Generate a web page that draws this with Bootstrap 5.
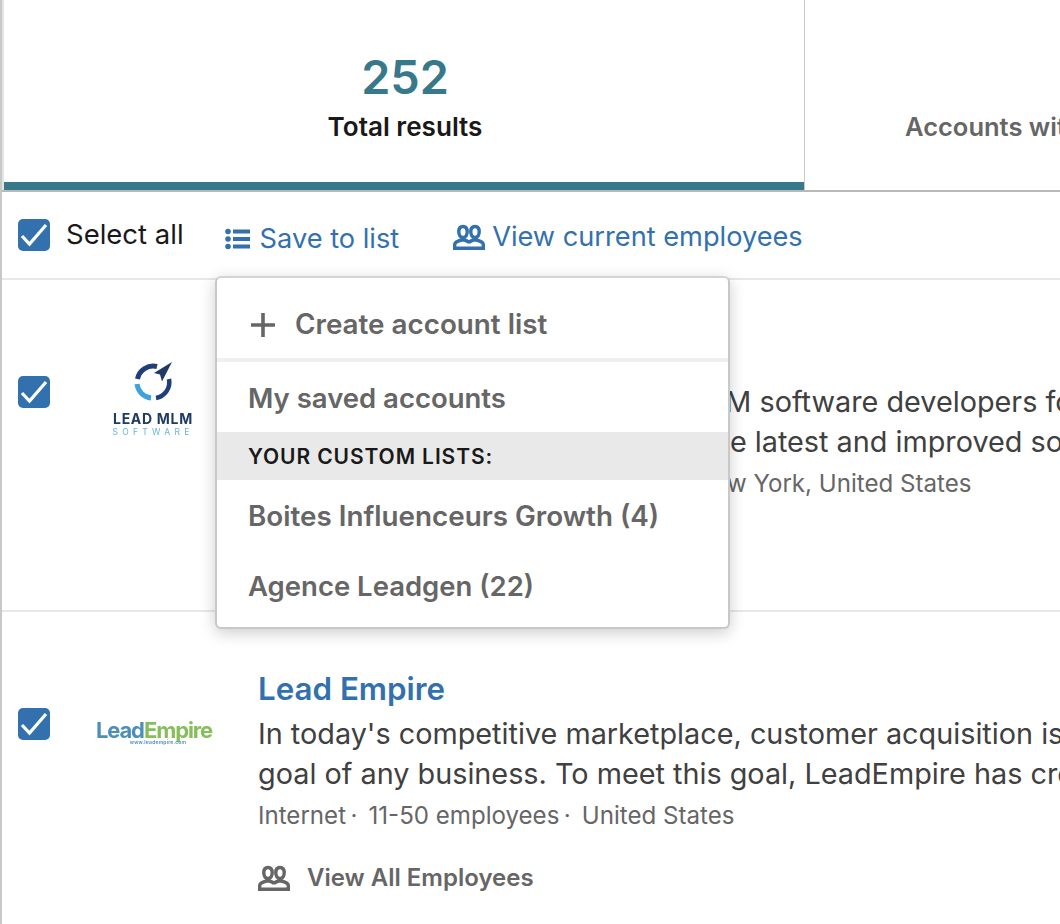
<!DOCTYPE html>
<html lang="en">
<head>
<meta charset="utf-8">
<title>Accounts</title>
<link href="https://cdn.jsdelivr.net/npm/bootstrap@5.3.0/dist/css/bootstrap.min.css" rel="stylesheet">
<style>
html,body{height:924px;overflow:hidden;background:#fff}
body{font-family:Inter,"Liberation Sans",sans-serif;color:#191919}
.pg{position:relative;height:924px;overflow:hidden;border-left:2px solid #c8c8c8}
.tabs{height:190px;border-bottom:2px solid #b8b8b8;box-sizing:content-box}
.tb{height:190px;text-align:center;flex:none}
.tb1{width:803px;padding-left:2px;border-right:1px solid #c9c9c9;border-left:2px solid #e4e4e4;box-shadow:inset 0 -8px 0 #37788a}
.tb2{flex:1;white-space:nowrap;overflow:hidden;padding-left:100px;text-align:left}
.num{font-size:46.800px;font-weight:600;color:#37788a;line-height:56px;padding-top:49px}
.tl{font-size:26.100px;font-weight:600;line-height:32px;margin-top:6px}
.tb2 .tl{color:#666;margin-top:111px;font-size:25.500px}
.tbar{height:88px;border-bottom:2px solid #e8e8e8;padding-left:16px}
.ck{width:32px;height:32px;background:#3271ad;border-radius:5px;display:flex;align-items:center;justify-content:center;flex:none}
.sa{font-size:27.500px;margin-left:16px;line-height:34px;margin-top:-2px}
.lk{color:#3271ad;font-size:27.200px;text-decoration:none;line-height:34px;display:flex;align-items:center}
.lk1{margin-left:41px;margin-top:8px}
.lk2{margin-left:54px;margin-top:4px}
.ic1{margin-right:10px}
.ic2{margin-right:7px}
.rw{height:332px;border-bottom:2px solid #e8e8e8;position:relative;padding-left:16px;display:flex}
.rw .ck{margin-top:96px}
.lg{width:130px;margin-left:38px;flex:none;text-align:center}
.bd{margin-left:40px;flex:1;min-width:0;white-space:nowrap;overflow:hidden}
.ttl{color:#3271ad;font-size:31.300px;font-weight:600;line-height:38px;text-decoration:none;display:block;margin-top:58px}
.dsc{font-size:28.800px;line-height:40px;color:#404040;margin-top:6px}
.mta{font-size:24.100px;line-height:32px;color:#666;margin-top:6px}
.ve{font-size:24px;font-weight:600;color:#666;display:flex;align-items:center;gap:17px;margin-top:31px;line-height:30px}
.lg1{margin-top:81px;filter:blur(.5px)}
.ln1{font-size:14px;font-weight:700;color:#1f3a63;letter-spacing:.7px;line-height:13px;margin-top:9px;white-space:nowrap}
.ln2{font-size:8.500px;color:#66b3de;letter-spacing:4.300px;line-height:10px;margin-top:2px;white-space:nowrap}
.lg2{margin-top:105px;margin-left:2px;font-size:22px;font-weight:700;letter-spacing:-1.100px;line-height:26px;filter:blur(.7px);white-space:nowrap}
.lg2 b{color:#4e8fb8;font-weight:700}
.lg2 i{color:#86bf5a;font-style:normal}
.ln3{font-size:5px;letter-spacing:.2px;line-height:5px;color:#4e8fb8;margin-top:-3px;padding-left:8px;font-weight:600}
.mnu{position:absolute;left:213px;top:276px;width:515px;height:353px;background:#fff;border:2px solid #c8c8c8;border-top-color:#d4d4d4;border-radius:6px;box-shadow:0 4px 16px rgba(0,0,0,.2);z-index:5;overflow:hidden;color:#666;font-weight:600;font-size:27.800px}
.mnu>div{display:flex;align-items:center}
.m1{height:84px;border-bottom:4px solid #f0f0f0;padding-left:34px;gap:20px;padding-top:13px}
.m2{height:70px;padding-left:31px;padding-top:3px;font-size:27.500px}
.m3{height:48px;background:#e9e9e9;color:#191919;font-size:21px;padding-left:31px;letter-spacing:.9px;padding-top:2px}
.m4{height:72px;padding-left:31px;padding-top:2px}
.m5{height:68px;padding-left:31px;padding-top:2px;font-size:27.500px}
</style>
</head>
<body>
<div class="pg">
  <div class="tabs d-flex">
    <div class="tb tb1"><div class="num">252</div><div class="tl">Total results</div></div>
    <div class="tb tb2"><div class="tl">Accounts with recent activity</div></div>
  </div>
  <div class="tbar d-flex align-items-center">
    <span class="ck"><svg width="28" height="26" viewBox="0 0 28 26"><path d="M2 14l7.500 8L26 3" fill="none" stroke="#fff" stroke-width="3.200"/></svg></span>
    <span class="sa">Select all</span>
    <a class="lk lk1" href="#"><svg class="ic1" width="25" height="22" viewBox="0 0 25 22" fill="#3271ad"><circle cx="3" cy="3.500" r="2.800"/><circle cx="3" cy="11" r="2.800"/><circle cx="3" cy="18.500" r="2.800"/><rect x="8" y="1.500" width="17" height="4"/><rect x="8" y="9" width="17" height="4"/><rect x="8" y="16.500" width="17" height="4"/></svg>Save to list</a>
    <a class="lk lk2" href="#"><svg class="ic2" width="32" height="26" viewBox="0 0 32 26" fill="none" stroke="#3271ad" stroke-width="3.400"><path d="M10 2.500c2.800 0 4.200 2.200 4.200 5.200s-1.400 5.800-4.200 5.800-4.200-2.800-4.200-5.800S7.200 2.500 10 2.500zM22 2.500c2.800 0 4.200 2.200 4.200 5.200s-1.400 5.800-4.200 5.800-4.200-2.800-4.200-5.800 1.400-5.200 4.200-5.200z"/><path d="M1.700 24.300v-3.800c0-2.500 3-3.500 6.800-4.500h3c2.500.7 4.500 1.800 4.500 3.500 0-1.700 2-2.800 4.500-3.500h3c3.800 1 6.800 2 6.800 4.500v3.800z"/></svg>View current employees</a>
  </div>
  <div class="rw">
    <span class="ck"><svg width="28" height="26" viewBox="0 0 28 26"><path d="M2 14l7.500 8L26 3" fill="none" stroke="#fff" stroke-width="3.200"/></svg></span>
    <div class="lg"><div class="lg1">
      <svg class="d-block mx-auto" width="40" height="42" viewBox="0 0 40 42"><path d="M24 5.500A16 16 0 0 0 4.500 18" fill="none" stroke="#1f3f7a" stroke-width="5"/><path d="M4 23a16 16 0 0 0 14 14" fill="none" stroke="#3ea3dc" stroke-width="5"/><path d="M23 37a16 16 0 0 0 13-19" fill="none" stroke="#1f3f7a" stroke-width="4.500"/><path d="M39 1L21 12l6 1.500 2 7z" fill="#1f3a63"/></svg>
      <div class="ln1">LEAD MLM</div><div class="ln2">SOFTWARE</div></div></div>
    <div class="bd">
      <a class="ttl" href="#">Lead MLM Software</a>
      <div class="dsc">We are one of the world's best MLM software developers for<br>network marketers wanting only the latest and improved solutions</div>
      <div class="mta">Internet Software&#8201;·&nbsp;&#8201;11-50 employees&#8201;·&nbsp;&#8201;&#8201;New York, United States</div>
    </div>
  </div>
  <div class="rw">
    <span class="ck"><svg width="28" height="26" viewBox="0 0 28 26"><path d="M2 14l7.500 8L26 3" fill="none" stroke="#fff" stroke-width="3.200"/></svg></span>
    <div class="lg"><div class="lg2"><b>Lead</b><i>Empire</i><div class="ln3">www.leadempire.com</div></div></div>
    <div class="bd">
      <a class="ttl" href="#">Lead Empire</a>
      <div class="dsc">In today's competitive marketplace, customer acquisition is the<br>goal of any business. To meet this goal, LeadEmpire has created</div>
      <div class="mta">Internet&#8201;·&nbsp;&#8201;11-50 employees&#8201;·&nbsp;&#8201;United States</div>
      <div class="ve"><svg width="32" height="26" viewBox="0 0 32 26" fill="none" stroke="#666" stroke-width="3.400"><path d="M10 2.500c2.800 0 4.200 2.200 4.200 5.200s-1.400 5.800-4.200 5.800-4.200-2.800-4.200-5.800S7.200 2.500 10 2.500zM22 2.500c2.800 0 4.200 2.200 4.200 5.200s-1.400 5.800-4.200 5.800-4.200-2.800-4.200-5.800 1.400-5.200 4.200-5.200z"/><path d="M1.700 24.300v-3.800c0-2.500 3-3.500 6.800-4.500h3c2.500.7 4.500 1.800 4.500 3.500 0-1.700 2-2.800 4.500-3.500h3c3.800 1 6.800 2 6.800 4.500v3.800z"/></svg>View All Employees</div>
    </div>
  </div>
  <div class="mnu">
    <div class="m1"><svg width="24" height="24" viewBox="0 0 24 24"><path d="M12 0v24M0 12h24" stroke="#666" stroke-width="3.600"/></svg>Create account list</div>
    <div class="m2">My saved accounts</div>
    <div class="m3">YOUR CUSTOM LISTS:</div>
    <div class="m4">Boites Influenceurs Growth (4)</div>
    <div class="m5">Agence Leadgen (22)</div>
  </div>
</div>
<script src="https://cdn.jsdelivr.net/npm/bootstrap@5.3.0/dist/js/bootstrap.bundle.min.js"></script>
</body>
</html>
